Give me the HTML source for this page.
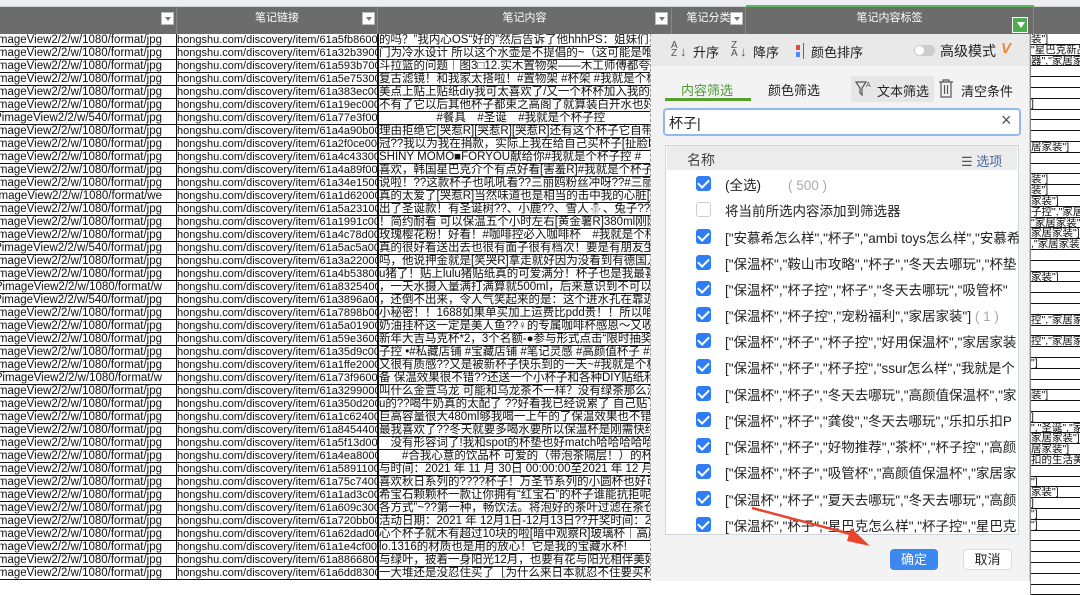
<!DOCTYPE html>
<html><head><meta charset="utf-8">
<style>
*{margin:0;padding:0;box-sizing:border-box}
body{width:1080px;height:581px;overflow:hidden;background:#fff;font-family:"Liberation Sans","Noto Sans CJK SC",sans-serif;position:relative}
.top{position:absolute;left:0;top:0;width:1080px;height:7px;background:#eceef2;border-bottom:1px solid #d0d0d0}
.hdr{position:absolute;top:7px;height:27px;background:#6c6c6c;color:#fff;font-size:11px;text-align:center;line-height:22px;border-right:1px solid #888}
.fb{position:absolute;width:13px;height:13px;background:#fff;border:1px solid #bbb;top:12px}
.fb:after{content:"";position:absolute;left:3px;top:4px;border-left:3px solid transparent;border-right:3px solid transparent;border-top:4px solid #777}
.tbl{position:absolute;top:34px;font-size:11.5px;color:#111;line-height:12px;white-space:nowrap;overflow:hidden}
.tbl div{height:13px;border-bottom:1px solid #111;overflow:hidden}
#c1{left:0;width:177px;border-right:1px solid #111}
#c1 div{display:flex;justify-content:flex-end;padding-right:14px}
#c2{left:177px;width:201px;border-right:1px solid #111;font-size:11px}
#c3{left:378px;width:294px;border-left:1px solid #111}
#c6{left:1030px;width:50px;top:34px;font-size:10.5px;line-height:10px;border-left:1px solid #888}
#c6 div{height:10.8px}
.pop{position:absolute;left:650px;top:34px;width:380px;height:547px;background:#f3f3f3;border-left:1px dashed #999;border-right:1px solid #ccc}
.bar{position:absolute;left:0;top:0;width:100%;height:32px;background:#e9e9e9}
.t{position:absolute;font-size:13px;color:#222;white-space:nowrap}
.chk{position:absolute;left:45px;width:15px;height:15px;border-radius:3px;background:#2f7df5}
.chk:after{content:"";position:absolute;left:4px;top:1px;width:5px;height:9px;border-right:2px solid #fff;border-bottom:2px solid #fff;transform:rotate(45deg)}
.it{position:absolute;left:74px;font-size:13.5px;color:#222;white-space:nowrap;width:294px;overflow:hidden}
</style></head><body>
<div class="top"></div>
<div style="position:absolute;left:746px;top:5px;width:288px;height:2px;background:#5cb85c"></div>
<div class="hdr" style="left:0;width:177px"></div>
<div class="fb" style="left:161px"></div>
<div class="hdr" style="left:177px;width:201px">笔记链接</div>
<div class="fb" style="left:362px"></div>
<div class="hdr" style="left:378px;width:294px">笔记内容</div>
<div class="hdr" style="left:672px;width:74px">笔记分类</div>
<div class="fb" style="left:655px"></div>
<div class="fb" style="left:730px"></div>
<div class="hdr" style="left:746px;width:288px">笔记内容标签</div>
<div class="hdr" style="left:1034px;width:46px;border:none"></div>
<div style="position:absolute;left:1012px;top:17px;width:16px;height:16px;background:#4caf50;border:1px solid #fff"><div style="position:absolute;left:4px;top:4px;border-left:4px solid transparent;border-right:4px solid transparent;border-top:6px solid #fff"></div></div>

<div class="tbl" id="c1">
<div>imageView2/2/w/1080/format/jpg</div><div>?imageView2/2/w/1080/format/jpg</div><div>?imageView2/2/w/1080/format/jpg</div><div>?imageView2/2/w/1080/format/jpg</div><div>imageView2/2/w/1080/format/jpg</div><div>imageView2/2/w/1080/format/jpg</div><div>c3?imageView2/2/w/540/format/jpg</div><div>imageView2/2/w/1080/format/jpg</div><div>imageView2/2/w/1080/format/jpg</div><div>?imageView2/2/w/1080/format/jpg</div><div>?imageView2/2/w/1080/format/jpg</div><div>imageView2/2/w/1080/format/jpg</div><div>60?imageView2/2/w/1080/format/we</div><div>?imageView2/2/w/1080/format/jpg</div><div>imageView2/2/w/1080/format/jpg</div><div>imageView2/2/w/1080/format/jpg</div><div>96?imageView2/2/w/540/format/jpg</div><div>?imageView2/2/w/1080/format/jpg</div><div>imageView2/2/w/1080/format/jpg</div><div>d1b?imageView2/2/w/1080/format/w</div><div>cb8?imageView2/2/w/540/format/jpg</div><div>?imageView2/2/w/1080/format/jpg</div><div>imageView2/2/w/1080/format/jpg</div><div>imageView2/2/w/1080/format/jpg</div><div>?imageView2/2/w/1080/format/jpg</div><div>imageView2/2/w/1080/format/jpg</div><div>80d?imageView2/2/w/1080/format/w</div><div>?imageView2/2/w/1080/format/jpg</div><div>imageView2/2/w/1080/format/jpg</div><div>?imageView2/2/w/1080/format/jpg</div><div>?imageView2/2/w/1080/format/jpg</div><div>?imageView2/2/w/1080/format/jpg</div><div>8d?imageView2/2/w/1080/format/jpg</div><div>imageView2/2/w/1080/format/jpg</div><div>?imageView2/2/w/1080/format/jpg</div><div>be?imageView2/2/w/1080/format/jpg</div><div>imageView2/2/w/1080/format/jpg</div><div>?imageView2/2/w/1080/format/jpg</div><div>imageView2/2/w/1080/format/jpg</div><div>e0?imageView2/2/w/1080/format/jpg</div><div>imageView2/2/w/1080/format/jpg</div><div>74?imageView2/2/w/1080/format/jpg</div>
</div>
<div class="tbl" id="c2">
<div>hongshu.com/discovery/item/61a5fb86000</div><div>hongshu.com/discovery/item/61a32b39000</div><div>hongshu.com/discovery/item/61a593b7000</div><div>hongshu.com/discovery/item/61a5e753000</div><div>hongshu.com/discovery/item/61a383ec000</div><div>hongshu.com/discovery/item/61a19ec0000</div><div>hongshu.com/discovery/item/61a77e3f000</div><div>hongshu.com/discovery/item/61a4a90b000</div><div>hongshu.com/discovery/item/61a2f0ce000</div><div>hongshu.com/discovery/item/61a4c433000</div><div>hongshu.com/discovery/item/61a4a89f000</div><div>hongshu.com/discovery/item/61a34e15000</div><div>hongshu.com/discovery/item/61a1d620000</div><div>hongshu.com/discovery/item/61a5a231000</div><div>hongshu.com/discovery/item/61a1991c000</div><div>hongshu.com/discovery/item/61a4c78d000</div><div>hongshu.com/discovery/item/61a5ac5a000</div><div>hongshu.com/discovery/item/61a3a22000</div><div>hongshu.com/discovery/item/61a4b53800</div><div>hongshu.com/discovery/item/61a83254000</div><div>hongshu.com/discovery/item/61a3896a000</div><div>hongshu.com/discovery/item/61a7898b000</div><div>hongshu.com/discovery/item/61a5a019000</div><div>hongshu.com/discovery/item/61a59e36000</div><div>hongshu.com/discovery/item/61a35d9c000</div><div>hongshu.com/discovery/item/61a1ffe2000</div><div>hongshu.com/discovery/item/61a73f96000</div><div>hongshu.com/discovery/item/61a32990000</div><div>hongshu.com/discovery/item/61a350d2000</div><div>hongshu.com/discovery/item/61a1c624000</div><div>hongshu.com/discovery/item/61a8454400</div><div>hongshu.com/discovery/item/61a5f13d000</div><div>hongshu.com/discovery/item/61a4ea8000</div><div>hongshu.com/discovery/item/61a5891100</div><div>hongshu.com/discovery/item/61a75c7400</div><div>hongshu.com/discovery/item/61a1ad3c000</div><div>hongshu.com/discovery/item/61a609c3000</div><div>hongshu.com/discovery/item/61a720bb000</div><div>hongshu.com/discovery/item/61a62dad000</div><div>hongshu.com/discovery/item/61a1e4cf000</div><div>hongshu.com/discovery/item/61a88668000</div><div>hongshu.com/discovery/item/61a6dd8300</div>
</div>
<div class="tbl" id="c3">
<div>的吗？”我内心OS“好的”然后告诉了他hhhPS：姐妹们</div><div>门为冷水设计 所以这个水壶是不提倡的~（这可能是唯一</div><div>斗拉篮的问题｜图3□12.实木置物架——木工师傅都夸的</div><div>复古滤镜！和我家太搭啦！#置物架 #杯架 #我就是个杯</div><div>美点上贴上贴纸diy我可太喜欢了/又一个杯杯加入我的杯</div><div>不有了它以后其他杯子都束之高阁了就算装白开水也好看</div><div>　　　　　#餐具　#圣诞　#我就是个杯子控</div><div>理由拒绝它[哭惹R][哭惹R][哭惹R]还有这个杯子它自带</div><div>冠??我以为我在捐款，实际上我在给自己买杯子[扯脸H]</div><div>SHINY MOMO■FORYOU献给你#我就是个杯子控 #</div><div>喜欢，韩国星巴克介个有点好看[害羞R]#我就是个杯子控</div><div>说啦！??这款杯子也吼吼看??三丽鸥粉丝冲呀??#三丽鸥</div><div>真的太爱了[哭惹R]当然味道也是相当的击中我的心脏[得意</div><div>出了圣诞款！有圣诞树??、小鹿??、雪人⛄、兔子??、小</div><div>！简约耐看 可以保温五个小时左右[黄金薯R]380ml刚刚好</div><div>玫瑰樱花粉！好看！#咖啡控必入咖啡杯　#我就是个杯子</div><div>真的很好看送出去也很有面子很有档次！要是有朋友生日想</div><div>吗，他说押金就是[笑哭R]拿走就好因为没看到有德国人直</div><div>u猪了！贴上lulu猪贴纸真的可爱满分！杯子也是我最喜欢的</div><div>，一天水摄入量满打满算就500ml，后来意识到不可以再这</div><div>，还倒不出来，令人气笑起来的是：这个进水孔在靠近杯子</div><div>小秘密！！1688如果单买加上运费比pdd贵！！所以咱们直</div><div>奶油挂杯这一定是美人鱼??♀的专属咖啡杯感恩～又收了</div><div>新年大吉马克杯*2，3个名额-●参与形式点击“限时抽奖”</div><div>子控 •#私藏店铺 #宝藏店铺 #笔记灵感 #高颜值杯子 #</div><div>又很有质感??又是被新杯子快乐到的一天~#我就是个杯子控</div><div>备 保温效果很不错??还送一个小杯子和各种DIY贴纸和美乐</div><div>叫什么金萱乌龙 可能和乌龙茶不一样？没有绿茶那么涩口，</div><div>u的??喝牛奶真的太配了 ??好看我已经说累了 自己贴了贴纸</div><div>巨高容量很大480ml够我喝一上午的了保温效果也不错 可以</div><div>最我喜欢了??冬天就要多喝水要所以保温杯是刚需快给男</div><div>　没有形容词了!我和spot的杯垫也好match哈哈哈哈哈</div><div>　　#合我心意的饮品杯 可爱的（带泡茶隔层！）的杯子</div><div>与时间：2021 年 11 月 30日 00:00:00至2021 年 12 月</div><div>喜欢秋日系列的????杯子！万圣节系列的小圆杯也好可爱</div><div>希宝石颗颗杯一款让你拥有“红宝石”的杯子谁能抗拒呢?</div><div>各方式”~??第一种，畅饮法。将泡好的茶叶过滤在茶仓中</div><div>活动日期：2021 年 12月1日-12月13日??开奖时间：2021</div><div>心个杯子就木有超过10块的啦[暗中观察R]玻璃杯｜高颜值杯</div><div>lo.1316的材质也是用的放心！它是我的宝藏水杯!</div><div>与绿叶，披着一身阳光12月，也要有花与阳光相伴美好的这</div><div>一大堆还是没忍住买了［为什么来日本就忍不住要买杯子</div>
</div>
<div class="tbl" id="c6">
<div>装"]</div><div>"星巴克新品</div><div>器","家居家</div><div></div><div></div><div></div><div>]</div><div></div><div></div><div></div><div>居家装"]</div><div></div><div></div><div>装"]</div><div>装"]</div><div>家装"]</div><div>子控","家居</div><div>"家居家装"]</div><div>家居家装"]</div><div>,"家居家装</div><div></div><div></div><div>家装"]</div><div></div><div></div><div></div><div>控","家居家</div><div></div><div>控","家居家</div><div></div><div>"]</div><div></div><div></div><div>装"]</div><div></div><div>]</div><div>","圣诞","家</div><div>家居家装"]</div><div>居家装"]</div><div>扣的生活美</div><div></div><div>"]</div><div>家装"]</div><div>]</div><div>"]</div><div>"]</div><div></div><div></div><div></div><div></div><div></div><div></div>
</div>

<div class="pop">
<div class="bar"></div>
<div class="t" style="left:20px;top:8px;font-size:10px;line-height:8px;color:#555">A<br>Z</div><div class="t" style="left:29px;top:10px;color:#555">↓</div>
<div class="t" style="left:42px;top:8px">升序</div>
<div class="t" style="left:80px;top:8px;font-size:10px;line-height:8px;color:#555">Z<br>A</div><div class="t" style="left:89px;top:10px;color:#555">↓</div>
<div class="t" style="left:102px;top:8px">降序</div>
<div style="position:absolute;left:145px;top:11px;width:4px;height:5px;background:#e44"></div><div style="position:absolute;left:145px;top:18px;width:4px;height:5px;background:#58f"></div><div style="position:absolute;left:152px;top:9px;width:1px;height:16px;background:#666"></div>
<div class="t" style="left:160px;top:8px">颜色排序</div>
<div style="position:absolute;left:263px;top:11px;width:21px;height:11px;border-radius:6px;background:#ccc"><div style="position:absolute;left:1px;top:1px;width:9px;height:9px;border-radius:50%;background:#fff"></div></div>
<div class="t" style="left:289px;top:7px;font-size:14px">高级模式</div>
<div class="t" style="left:350px;top:6px;color:#e8893a;font-weight:bold;font-style:italic;font-size:15px">V</div>

<div class="t" style="left:30px;top:46px;color:#4d9a33">内容筛选</div>
<div style="position:absolute;left:14px;top:64px;width:86px;height:3px;background:#5a9f2e"></div>
<div class="t" style="left:117px;top:46px">颜色筛选</div>
<div style="position:absolute;left:200px;top:42px;width:83px;height:26px;background:#e6e6e6;border-radius:2px"></div>
<svg style="position:absolute;left:204px;top:45px" width="18" height="20" viewBox="0 0 18 20"><path d="M1 3h10l-4 6v7l-2-2V9z" fill="none" stroke="#555" stroke-width="1.2"/><text x="11" y="8" font-size="7" fill="#555" font-family="Liberation Sans">A</text></svg>
<div class="t" style="left:226px;top:47px">文本筛选</div>
<svg style="position:absolute;left:287px;top:45px" width="16" height="19" viewBox="0 0 16 19"><path d="M1 3h14M5 3V1h6v2M3 3v15h10V3M6.5 6v9M9.5 6v9" fill="none" stroke="#555" stroke-width="1.2"/></svg>
<div class="t" style="left:310px;top:47px">清空条件</div>

<div style="position:absolute;left:12px;top:74px;width:358px;height:28px;background:#fff;border:2px solid #90b9ee;border-radius:4px"></div>
<div class="t" style="left:18px;top:79px;font-size:14px">杯子<span style="font-weight:100">|</span></div>
<div class="t" style="left:350px;top:76px;font-size:18px;color:#555">×</div>

<div style="position:absolute;left:14px;top:111px;width:354px;height:390px;background:#fff;border:1px solid #cfd6de"></div>
<div style="position:absolute;left:16px;top:112px;width:350px;height:24px;background:#ececec"></div>
<div class="t" style="left:36px;top:116px;font-size:14px;color:#444">名称</div>
<div class="t" style="left:310px;top:117px;color:#555">☰ <span style="color:#4a6a9a">选项</span></div>

<div class="chk" style="top:142px"></div><div class="it" style="top:140px">(全选)　　<span style="color:#aaa">( 500 )</span></div>
<div style="position:absolute;left:45px;top:168px;width:15px;height:15px;border-radius:3px;border:1px solid #ccc;background:#fff"></div><div class="it" style="top:166px">将当前所选内容添加到筛选器</div>
<div class="chk" style="top:195px"></div><div class="it" style="top:193px">["安慕希怎么样","杯子","ambi toys怎么样","安慕希</div>
<div class="chk" style="top:221px"></div><div class="it" style="top:219px">["保温杯","鞍山市攻略","杯子","冬天去哪玩","杯垫</div>
<div class="chk" style="top:247px"></div><div class="it" style="top:245px">["保温杯","杯子控","杯子","冬天去哪玩","吸管杯"</div>
<div class="chk" style="top:273px"></div><div class="it" style="top:271px">["保温杯","杯子控","宠粉福利","家居家装"] <span style="color:#aaa">( 1 )</span></div>
<div class="chk" style="top:299px"></div><div class="it" style="top:297px">["保温杯","杯子","杯子控","好用保温杯","家居家装</div>
<div class="chk" style="top:325px"></div><div class="it" style="top:323px">["保温杯","杯子","杯子控","ssur怎么样","我就是个</div>
<div class="chk" style="top:352px"></div><div class="it" style="top:350px">["保温杯","杯子","冬天去哪玩","高颜值保温杯","家</div>
<div class="chk" style="top:378px"></div><div class="it" style="top:376px">["保温杯","杯子","龚俊","冬天去哪玩","乐扣乐扣P</div>
<div class="chk" style="top:404px"></div><div class="it" style="top:402px">["保温杯","杯子","好物推荐","茶杯","杯子控","高颜</div>
<div class="chk" style="top:430px"></div><div class="it" style="top:428px">["保温杯","杯子","吸管杯","高颜值保温杯","家居家</div>
<div class="chk" style="top:457px"></div><div class="it" style="top:455px">["保温杯","杯子","夏天去哪玩","冬天去哪玩","高颜</div>
<div class="chk" style="top:483px"></div><div class="it" style="top:481px">["保温杯","杯子","星巴克怎么样","杯子控","星巴克</div>

<div style="position:absolute;left:239px;top:515px;width:48px;height:21px;background:#3d88ef;border-radius:4px;color:#fff;font-size:13px;text-align:center;line-height:21px">确定</div>
<div style="position:absolute;left:312px;top:515px;width:49px;height:21px;background:#fff;border:1px solid #ddd;border-radius:4px;color:#222;font-size:13px;text-align:center;line-height:19px">取消</div>
</div>
<svg style="position:absolute;left:0;top:0" width="1080" height="581"><path d="M752 508 L858 536" stroke="#e8452c" stroke-width="2.5"/><path d="M870 546 L851 528 L847 541 Z" fill="#e8452c"/></svg>
</body></html>
